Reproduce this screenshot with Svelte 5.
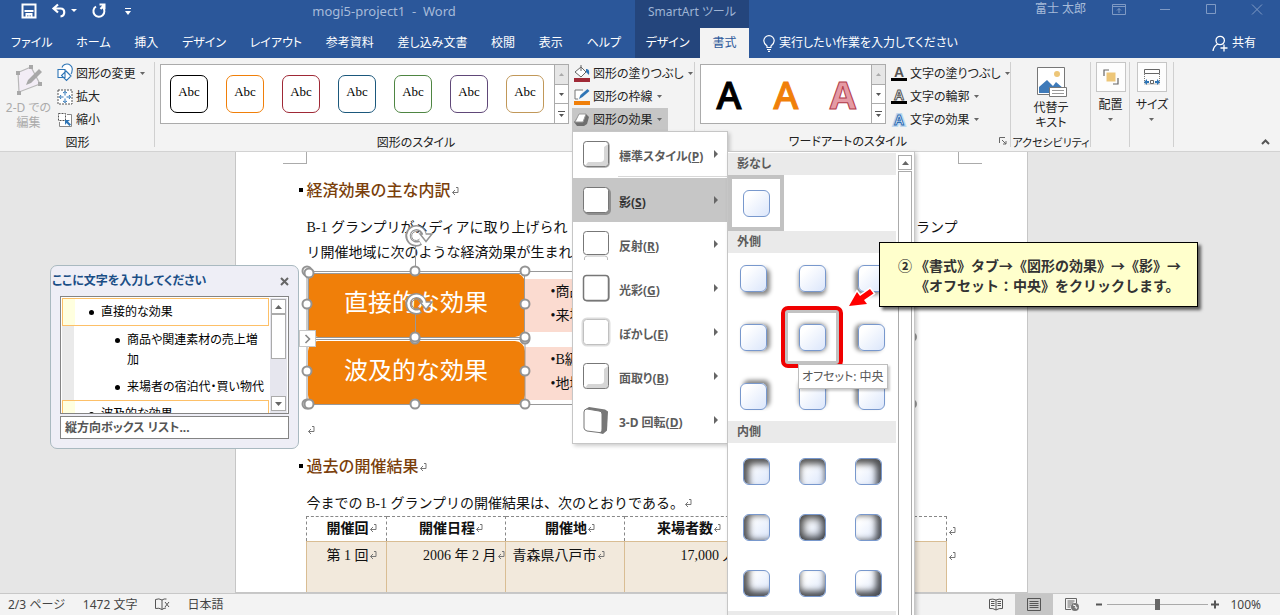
<script>
  const tabs = ['ファイル', 'ホーム', '挿入', 'デザイン', 'レイアウト', '参考資料', '差し込み文書', '校閲', '表示', 'ヘルプ'];
  const shapeStyles = ['#000000', '#f07f09', '#9f2936', '#1b587c', '#4e8542', '#604878', '#c19859'];
  const effects = [
    { kind: 'preset', label: '標準スタイル', key: 'P' },
    { kind: 'shadow', label: '影', key: 'S' },
    { kind: 'reflect', label: '反射', key: 'R' },
    { kind: 'glow', label: '光彩', key: 'G' },
    { kind: 'soft', label: 'ぼかし', key: 'E' },
    { kind: 'bevel', label: '面取り', key: 'B' },
    { kind: 'rotate', label: '3-D 回転', key: 'D' }
  ];
  const directions = [1, 0, -1].flatMap((dy) => [1, 0, -1].map((dx) => ({ dx, dy })));
  const handles = [
    [12, 12], [120, 12], [230, 12], [12, 45], [230, 45], [120, 80], [120, 78], [230, 80], [230, 78],
    [12, 112], [230, 112], [12, 145], [120, 145], [230, 145], [14, 14], [14, 145]
  ];
  let zoom = $state(100);
</script>

{#snippet mark()}
  <svg class="mark" viewBox="0 0 8 10" aria-hidden="true"><path d="M5 1.5h2v5H1.5M4 4 1.5 6.5 4 9" /></svg>
{/snippet}

{#snippet caret()}
  <svg class="caret" viewBox="0 0 5 3" aria-hidden="true"><path d="M0 0h5L2.500 3z" /></svg>
{/snippet}

{#snippet spinner()}
  <span class="spin">
    <button aria-label="前の行" disabled><svg viewBox="0 0 5 3"><path d="M0 3h5L2.500 0z" /></svg></button>
    <button aria-label="次の行"><svg viewBox="0 0 5 3"><path d="M0 0h5L2.500 3z" /></svg></button>
    <button aria-label="その他"><svg class="more" viewBox="0 0 7 6"><path d="M0 0h7v1H0zM1 3h5L3.500 6z" /></svg></button>
  </span>
{/snippet}

<div class="app">
  <header class="top">
    <div class="left">
      <div class="title">
        <button class="quick" aria-label="上書き保存">
          <svg width="16" height="16" viewBox="0 0 16 16"><path d="M1.500 1.500h13v13h-13zM3.500 8h9M5.500 14.500v-3.500h5v3.500" fill="none" stroke="#fff" stroke-width="2" /><path d="M8 11v3" stroke="#fff" stroke-width="1.500" /></svg>
        </button>
        <button class="quick" aria-label="元に戻す">
          <svg width="26" height="16" viewBox="0 0 26 16"><path d="M7 1.500 2.500 5.500 7 9.500M3 5.500h6.500c5 0 5 7.500 0 8" fill="none" stroke="#fff" stroke-width="2.200" /><path d="M20 6h6l-3 3z" fill="#fff" /></svg>
        </button>
        <button class="quick" aria-label="やり直し">
          <svg width="16" height="16" viewBox="0 0 16 16"><path d="M5 3.500a5.500 5.500 0 1 0 6.500.5M8.500 1.500h5v5M13 2 9.500 6" fill="none" stroke="#fff" stroke-width="2" /></svg>
        </button>
        <button class="quick custom" aria-label="クイック アクセスのカスタマイズ">
          <svg width="6" height="7" viewBox="0 0 6 7"><path d="M0 0h6v1H0zM0 3h6L3 7z" fill="#fff" /></svg>
        </button>
        <span class="doc">mogi5-project1&nbsp; -&nbsp; Word</span>
      </div>
      <nav class="tabs">
        {#each tabs as t}<button class="tab">{t}</button>{/each}
      </nav>
    </div>
    <div class="context">
      <div class="ctx-title">SmartArt ツール</div>
      <nav class="ctx-tabs"><button class="tab">デザイン</button><button class="tab active">書式</button></nav>
    </div>
    <div class="right">
      <div class="window">
        <span class="user">富士 太郎</span>
        <button aria-label="リボンの表示オプション"><svg viewBox="0 0 14 11"><path d="M.5.500h13v10H.5zM.5 2.500h13M7 9V4.500M5 6.500l2-2 2 2" /></svg></button>
        <button aria-label="最小化"><svg viewBox="0 0 14 11"><path d="M2 5.500h10" /></svg></button>
        <button aria-label="最大化"><svg viewBox="0 0 14 11"><path d="M2.500.500h9v9h-9z" /></svg></button>
        <button aria-label="閉じる"><svg viewBox="0 0 14 11"><path d="M2 .500l10 10M12 .500l-10 10" /></svg></button>
      </div>
      <div class="ask">
        <button class="tell">
          <svg width="12" height="17" viewBox="0 0 12 17"><path d="M4 12.500V11C2 9.500.8 8 .8 5.800a5.200 5.200 0 0 1 10.400 0C11.200 8 10 9.500 8 11v1.500zM4 14.500h4M5 16.300h2" fill="none" stroke="#fff" stroke-width="1.200" /></svg>
          実行したい作業を入力してください
        </button>
        <button class="share">
          <svg width="16" height="17" viewBox="0 0 16 17"><path d="M4 5.500a4.200 4.200 0 1 1 8.400 0 4.200 4.200 0 0 1-8.400 0M1 16c.5-3.500 2-5.500 4.500-7M12 9.500v7M8.500 13h7" fill="none" stroke="#fff" stroke-width="1.300" /></svg>
          共有
        </button>
      </div>
    </div>
  </header>

  <section class="ribbon" aria-label="リボン">
    <div class="group g-shape">
      <div class="body">
        <button class="big disabled" disabled>
          <svg width="30" height="32" viewBox="0 0 30 32"><path d="M4 7.500 17 2l9 17L5 27z" fill="#f3edf6" stroke="#b8b8b8" stroke-width="1.200" /><g fill="#a8a8a8"><path d="M2 6h4v4H2zM15 0h4v4h-4zM24 17h4v4h-4zM3 26h4v4H3zM12 20l2-5 11-11 3 3-11 11z" /></g></svg>
          2-D での<br />編集
        </button>
        <div class="stack">
          <button class="cmd"><svg width="16" height="16" viewBox="0 0 16 16"><path d="M1 3.500h7v8H1zM5 1.500a5 5 0 0 1 10 3.500 5 5 0 0 1-1 3M9 5l5 5-4.500 4.500-5-5z" fill="#fff" stroke="#2e75b6" stroke-width="1.100" /></svg>図形の変更{@render caret()}</button>
          <button class="cmd"><svg width="16" height="16" viewBox="0 0 16 16"><path d="M1 1h14v14H1z" fill="#fff" stroke="#555" stroke-dasharray="2 1" /><path d="M8 2.500v4M6 4l2-1.500L10 4M8 13.500v-4M6 12l2 1.500 2-1.500M2.500 8h4M4 6 2.500 8 4 10M13.500 8h-4M12 6l1.500 2L12 10" fill="none" stroke="#2e75b6" /></svg>拡大</button>
          <button class="cmd"><svg width="16" height="16" viewBox="0 0 16 16"><path d="M10 2.500h4.500v12h-12V10" fill="#fff" stroke="#888" /><path d="M1.500 1.500h7v7h-7z" fill="#fff" stroke="#555" stroke-dasharray="2 1" /><path d="M8 8h5l-2 1.500 3 3-1.500 1.500-3-3L8 13z" fill="#2e75b6" /></svg>縮小</button>
        </div>
      </div>
      <div class="label">図形</div>
    </div>

    <div class="group g-styles">
      <div class="body">
        <div class="gallery">
          {#each shapeStyles as c}<button class="abc" style:border-color={c}>Abc</button>{/each}
          {@render spinner()}
        </div>
        <div class="stack">
          <button class="cmd"><svg width="16" height="18" viewBox="0 0 16 18"><path d="M7 2l5 5-5 5-6-5zM7 0v6" fill="#fff" stroke="#666" /><path d="M12 4c3 0 3.500 2 3 6l-3-3z" fill="#2e75b6" /><path d="M0 13h16v4H0z" fill="#9f2936" /></svg>図形の塗りつぶし{@render caret()}</button>
          <button class="cmd"><svg width="16" height="18" viewBox="0 0 16 18"><path d="M9 2H1v9h3" fill="#fff" stroke="#777" /><path d="M5 11l1.500-4 7-6 2 2-7 6z" fill="#2e75b6" /><path d="M0 13h16v4H0z" fill="#f07f09" /></svg>図形の枠線{@render caret()}</button>
          <div class="anchor">
            <button class="cmd open" aria-haspopup="menu" aria-expanded="true"><svg width="16" height="16" viewBox="0 0 16 16"><path d="M6 2h6l3 3-2 7-3 2H3l-3-4z" fill="#6e6e6e" /><path d="M5 2h7l-3 8H1z" fill="#fff" stroke="#999" /></svg>図形の効果{@render caret()}</button>
            <div class="menu" role="menu">
              {#each effects as e, i}
                <button class="item" class:chosen={e.kind === 'shadow'} role="menuitem">
                  <svg class="fx" width="32" height="34" viewBox="0 0 32 34" aria-hidden="true">
                    {#if e.kind === 'rotate'}
                      <path d="M5 6.500 9 4l16 2.500 3 2-1 19-4 3.500-4-1z" fill="#777" />
                      <path d="M4 9q0-3 3-3l12 2q3 0 3 3v15q0 4-3 3.500L7 28q-3-1-3-3z" fill="#fff" stroke="#777" />
                    {:else}
                      {#if e.kind === 'shadow'}<rect x="4" y="5" width="27" height="27" rx="5" fill="#777" opacity=".7" />{/if}
                      {#if e.kind === 'glow' || e.kind === 'preset'}<rect x="3" y="4" width="27" height="27" rx="5" fill="#bbb" />{/if}
                      {#if e.kind === 'soft'}<rect x="3" y="4" width="26" height="26" rx="4" fill="#fff" stroke="#ddd" stroke-width="3" />{/if}
                      {#if e.kind === 'reflect'}<path d="M4.500 33v-2q0-2 3-2h17q3 0 3 2v2" fill="none" stroke="#bbb" />{/if}
                      <rect x="3.500" y="4.500" width="25" height={e.kind === 'reflect' ? 23 : 25} rx="3" fill="#fff" stroke={e.kind === 'soft' ? '#c0c0c0' : '#777'} stroke-width={e.kind === 'glow' ? 1.500 : 1} />
                      {#if e.kind === 'preset' || e.kind === 'bevel'}<path d="M28 7 24 10v12q0 3-4 3H8l-3 4q1 .5 3 .5h17q3 0 3-3z" fill="#999" opacity=".4" />{/if}
                    {/if}
                  </svg>
                  <span class="name">{e.label}(<u>{e.key}</u>)</span>
                  <svg class="arrow" width="4" height="8" viewBox="0 0 4 8" aria-hidden="true"><path d="M0 0l4 4-4 4z" /></svg>
                </button>
                {#if i === 0}<div class="sep"></div>{/if}
              {/each}
              <div class="sub">
                <div class="choices">
                  <h3>影なし</h3>
                  <button class="cell none" aria-label="影なし"><span class="tile"></span></button>
                  <h3>外側</h3>
                  <div class="grid">
                    {#each directions as d}
                      <button class="cell" class:hover={!d.dx && !d.dy} aria-label="オフセット">
                        <span class="tile outer" class:mid={!d.dx && !d.dy} style:--dx={d.dx} style:--dy={d.dy}></span>
                        {#if !d.dx && !d.dy}<span class="ring"></span><span class="tip" role="tooltip">オフセット: 中央</span>{/if}
                      </button>
                    {/each}
                  </div>
                  <h3>内側</h3>
                  <div class="grid">
                    {#each directions as d}
                      <button class="cell" aria-label="内側"><span class="tile inner" class:mid={!d.dx && !d.dy} style:--dx={d.dx} style:--dy={d.dy}></span></button>
                    {/each}
                  </div>
                  <h3></h3>
                </div>
                <div class="bar"><button aria-label="上へ"><svg width="7" height="4" viewBox="0 0 7 4"><path d="M0 4h7L3.500 0z" /></svg></button><span></span></div>
              </div>
            </div>
          </div>
        </div>
      </div>
      <div class="label">図形のスタイル</div>
    </div>

    <div class="group g-art">
      <div class="body">
        <div class="gallery art">
          <button aria-label="塗りつぶし 黒"><svg width="40" height="40" viewBox="0 0 40 40"><text x="20" y="35" class="wa" fill="#000" stroke="#000">A</text></svg></button>
          <button aria-label="塗りつぶし オレンジ"><svg width="40" height="40" viewBox="0 0 40 40"><text x="20" y="35" class="wa" fill="#f07f09" stroke="#f07f09">A</text></svg></button>
          <button aria-label="塗りつぶし 赤"><svg width="40" height="40" viewBox="0 0 40 40"><text x="20" y="35" class="wa heavy" fill="#e59aa4" stroke="#b23a4a">A</text></svg></button>
          {@render spinner()}
        </div>
        <div class="stack">
          <button class="cmd"><svg width="16" height="16" viewBox="0 0 16 16"><text x="8" y="11" class="la" fill="#555">A</text><path d="M0 12h16v3H0z" /></svg>文字の塗りつぶし{@render caret()}</button>
          <button class="cmd"><svg width="16" height="16" viewBox="0 0 16 16"><text x="8" y="11" class="la" fill="#fff" stroke="#555">A</text><path d="M0 12h16v3H0z" /></svg>文字の輪郭{@render caret()}</button>
          <button class="cmd"><svg width="16" height="16" viewBox="0 0 16 16"><text x="8" y="13" class="la" fill="#fff" stroke="#bdd7ee" stroke-width="4">A</text><text x="8" y="13" class="la" fill="#fff" stroke="#2e6db4">A</text></svg>文字の効果{@render caret()}</button>
        </div>
      </div>
      <div class="label">ワードアートのスタイル<button class="launch" aria-label="ダイアログを開く"><svg width="8" height="8" viewBox="0 0 8 8"><path d="M.5 6V.500H6M3 3l4 4M7 4v3H4" fill="none" stroke="#666" /></svg></button></div>
    </div>

    <div class="group g-acc">
      <div class="body">
        <button class="big">
          <svg width="30" height="32" viewBox="0 0 30 32"><path d="M1.500 2.500h27v27h-27z" fill="#fff" stroke="#777" /><circle cx="21" cy="9" r="3" fill="#edc678" /><path d="M3 28v-6l8-7 6 6 3-4 8 7v4z" fill="#3e7ab9" /><path d="M13.500 22.500h17v9h-17z" fill="#fff" stroke="#777" /><path d="M16 25.500h12M16 28.500h12" stroke="#999" /></svg>
          代替テ<br />キスト
        </button>
      </div>
      <div class="label">アクセシビリティ</div>
    </div>

    <div class="group g-small narrow">
      <button class="boxed"><span class="box"><svg width="16" height="16" viewBox="0 0 16 16"><path d="M1 7V1h5M15 9v6h-5" fill="none" stroke="#666" stroke-width="1.200" /><path d="M3.500 3.500h9v9h-9z" fill="#edc678" /></svg></span>配置{@render caret()}</button>
    </div>
    <div class="group g-small">
      <button class="boxed"><span class="box"><svg width="16" height="16" viewBox="0 0 16 16"><path d="M.5.500h15v4H.5z" fill="#fff" stroke="#666" /><path d="M.5 5v10h15V5" fill="none" stroke="#777" stroke-dasharray="1 1" /><path d="M6.500 11.500h3v3h-3z" fill="#fff" stroke="#666" /><path d="M0 13l3-3v2h2v2H3v2zM16 13l-3-3v2h-2v2h2v2z" fill="#2e75b6" /></svg></span>サイズ{@render caret()}</button>
    </div>
    <button class="fold" aria-label="リボンを折りたたむ"><svg width="9" height="6" viewBox="0 0 9 6"><path d="M1 5l3.500-3.500L8 5" fill="none" stroke="#555" stroke-width="2" /></svg></button>
  </section>

  <main class="work">
    <article class="page">
      <div class="crops"><i></i><i></i></div>
      <h2>経済効果の主な内訳{@render mark()}</h2>
      <p class="wide"><span>B-1 グランプリがメディアに取り上げられ</span><span>ランプ</span></p>
      <p>リ開催地域に次のような経済効果が生まれ</p>
      <div class="art-frame">
        <div class="row"><div class="node">直接的な効果</div><ul><li>商品</li><li>来場</li></ul></div>
        <div class="row"><div class="node">波及的な効果</div><ul><li>B級</li><li>地域</li></ul></div>
        <svg class="sel" width="640" height="200" viewBox="0 -40 640 200" aria-hidden="true">
          <g fill="none" stroke="#999">
            <path d="M12 12.500h605v133H12zM13.500 14.500h216v64h-216zM12 80.500h218v65" />
            <path d="M120.500-15v27M120.500 52v26" />
          </g>
          {#each [-23, 45] as y}
            <g fill="none" transform="translate(121 {y})"><path d="M4.500 6.500A8 8 0 1 1 8-1" stroke="#949494" stroke-width="5.500" /><path d="M3.500 3A4.500 4.500 0 1 1 3-3.500" stroke="#949494" /><path d="M4-2h12L10 5.500z" fill="#fff" stroke="#949494" stroke-width="1.500" /><path d="M4 7A8 8 0 1 1 8.500-.500" stroke="#fff" stroke-width="2.500" /></g>
          {/each}
          {#each handles as [x, y]}<circle cx={x} cy={y} r="4.500" fill="#fff" stroke="#949494" stroke-width="2" />{/each}
          <circle cx="617" cy="78" r="4" fill="#fff" stroke="#999" stroke-width="2" /><circle cx="617" cy="145" r="4" fill="#fff" stroke="#999" stroke-width="2" />
        </svg>
        <button class="toggle" aria-label="テキスト ウィンドウ"><svg width="7" height="10" viewBox="0 0 7 10"><path d="M1.500 1l4 4-4 4" fill="none" stroke="#888" stroke-width="1.600" /></svg></button>
      </div>
      <p class="blank">{@render mark()}</p>
      <h2 class="second">過去の開催結果{@render mark()}</h2>
      <p class="lead">今までの B-1 グランプリの開催結果は、次のとおりである。{@render mark()}</p>
      <div class="table-line">
        <table>
          <colgroup><col class="c1" /><col class="c2" /><col class="c2" /><col class="c2" /><col /></colgroup>
          <thead><tr><th>開催回{@render mark()}</th><th>開催日程{@render mark()}</th><th>開催地{@render mark()}</th><th>来場者数{@render mark()}</th><th></th></tr></thead>
          <tbody><tr><td class="mid">第 1 回{@render mark()}</td><td class="num">2006 年 2 月{@render mark()}</td><td>青森県八戸市{@render mark()}</td><td class="num people">17,000 人</td><td></td></tr></tbody>
        </table>
        <div class="ends">{@render mark()}{@render mark()}</div>
      </div>
    </article>

    <aside class="pane">
      <div class="pane-top"><strong>ここに文字を入力してください</strong><button aria-label="閉じる"><svg width="9" height="9" viewBox="0 0 9 9"><path d="M1 1l7 7M8 1 1 8" stroke="#666" stroke-width="2" /></svg></button></div>
      <div class="listbox">
        <ul class="lines">
          <li class="one">直接的な効果</li>
          <li class="two">商品や関連素材の売上増<br />加</li>
          <li class="two">来場者の宿泊代・買い物代</li>
          <li class="one">波及的な効果</li>
        </ul>
        <div class="scroll"><button aria-label="上へ"><svg width="7" height="4" viewBox="0 0 7 4"><path d="M0 4h7L3.500 0z" /></svg></button><span></span><button class="down" aria-label="下へ"><svg width="7" height="4" viewBox="0 0 7 4"><path d="M0 0h7L3.500 4z" /></svg></button></div>
      </div>
      <button class="kind">縦方向ボックス リスト...</button>
    </aside>

    <div class="callout">
      <span>②</span><span>《書式》タブ→《図形の効果》→《影》→<br />《オフセット：中央》をクリックします。</span>
      <svg class="pointer" width="30" height="28" viewBox="0 0 30 28" aria-hidden="true"><path d="M3 21 11 7l3 4L24 4l3.500 4.500L18 15l3 4z" fill="#fff" stroke="#fff" stroke-width="3" /><path d="M3 21 11 7l3 4L24 4l3.500 4.500L18 15l3 4z" fill="#f00" /></svg>
    </div>
  </main>

  <footer class="status">
    <span>2/3 ページ</span><span>1472 文字</span>
    <button aria-label="文章校正"><svg width="15" height="13" viewBox="0 0 15 13"><path d="M7 2Q4 0 .5 1.500v9Q4 9.500 7 11.500zM7 2q2-1.500 4.500-1M7 11.500q2-1.500 4-1.500M10 4l4 5M14 4l-4 5" fill="none" stroke="#555" /></svg></button>
    <span>日本語</span>
    <div class="views">
      <button aria-label="閲覧モード"><svg width="14" height="13" viewBox="0 0 14 13"><path d="M7 2Q4 .500.500 1.500v9Q4 10 7 12q3-2 6.500-1.500v-9Q10 .500 7 2v10M2 3.500h3.500M2 5.500h3.500M2 7.500h3.500M8.500 3.500H12M8.500 5.500H12M8.500 7.500H12" fill="none" stroke="#555" /></svg></button>
      <button class="on" aria-label="印刷レイアウト"><svg width="14" height="13" viewBox="0 0 14 13"><path d="M.5.500h13v12H.5zM2.500 3.500h9M2.500 5.500h9M2.500 7.500h9M2.500 9.500h9" fill="none" stroke="#555" /></svg></button>
      <button aria-label="Web レイアウト"><svg width="14" height="13" viewBox="0 0 14 13"><path d="M6 11.500H.5V.500h11v5M2.500 3h7M2.500 5h6M2.500 7h4M2.500 9h3" fill="none" stroke="#666" /><circle cx="10" cy="9" r="4" fill="#777" /><path d="M8 7l3 1-1 2M12 9l-1 2" stroke="#fff" fill="none" /></svg></button>
    </div>
    <button class="step" aria-label="縮小"><svg width="6" height="9" viewBox="0 0 6 9"><path d="M0 4.500h6" stroke="#555" stroke-width="2" /></svg></button>
    <input type="range" min="10" max="190" bind:value={zoom} aria-label="ズーム" />
    <button class="step" aria-label="拡大"><svg width="8" height="9" viewBox="0 0 8 9"><path d="M0 4.500h8M4 .500v8" stroke="#555" stroke-width="2" /></svg></button>
    <span class="pct">{zoom}%</span>
  </footer>
</div>

<style>
  :global(body) { margin: 0; }
  .app {
    height: 100vh; display: flex; flex-direction: column; overflow: hidden; position: relative;
    font: 12px/16px 'Noto Sans', 'Noto Sans CJK JP', sans-serif; font-feature-settings: 'palt'; color: #222; background: #e6e6e6;
  }
  .app * { box-sizing: border-box; }
  button { font: inherit; font-feature-settings: inherit; color: inherit; background: none; border: 0; padding: 0; margin: 0; white-space: nowrap; }
  ul, p, h2, h3 { margin: 0; padding: 0; }
  ul { list-style: none; }
  svg { flex: none; overflow: visible; }
  .caret { width: 5px; height: 3px; fill: #666; }
  .mark { width: 8px; height: 10px; fill: none; stroke: #777; }

  .top { display: flex; background: #2b579a; color: #fff; }
  .left { flex: 0 0 635px; }
  .title { display: flex; align-items: center; height: 28px; padding: 0 0 6px 21px; gap: 14px; }
  .quick { display: flex; }
  .custom { padding-left: 4px; }
  .doc { margin: 0 auto; padding-right: 72px; padding-left: 60px; font-size: 13px; color: #a7bbd9; }
  .tabs { display: flex; height: 30px; justify-content: space-between; padding: 0 3px 0 0; }
  .tab { padding: 0 11px; height: 30px; color: #fff; }
  .context { flex: 0 0 114px; background: #24457c; }
  .ctx-title { height: 28px; line-height: 24px; text-align: center; font-size: 12px; color: #9fb4d4; }
  .ctx-tabs { display: flex; }
  .ctx-tabs .tab { flex: 1; padding: 0; }
  .ctx-tabs .active { background: #f3f3f3; color: #2b579a; flex: 0 0 49px; }
  .right { flex: 1; }
  .window { display: flex; height: 28px; padding: 0 16px 10px 0; align-items: center; justify-content: flex-end; gap: 32px; }
  .user { color: #a7bbd9; margin-right: -6px; }
  .window button { display: flex; width: 14px; }
  .window svg { width: 14px; height: 11px; fill: none; stroke: #7f9ac4; }
  .ask { display: flex; height: 30px; justify-content: space-between; padding: 0 24px 0 14px; }
  .tell, .share { display: flex; align-items: center; gap: 4px; }

  .ribbon { display: flex; height: 94px; background: #f3f3f3; border-bottom: 1px solid #d2d2d2; }
  .group { display: flex; flex-direction: column; position: relative; min-width: 0; }
  .group::after { content: ''; position: absolute; right: 0; top: 4px; bottom: 4px; width: 1px; background: #d0d0d0; }
  .body { display: flex; height: 73px; padding-top: 4px; }
  .label { height: 20px; line-height: 23px; text-align: center; white-space: nowrap; }
  .g-shape { flex: 0 0 155px; }
  .g-styles { flex: 0 0 540px; padding-left: 5px; }
  .g-styles .label { padding-right: 23px; }
  .g-art { flex: 0 0 316px; padding-left: 5px; }
  .g-art .label { display: flex; justify-content: flex-end; align-items: center; gap: 92px; padding-right: 4px; }
  .g-acc { flex: 0 0 80px; align-items: center; }
  .g-acc .label { font-size: 11px; }
  .g-small { flex: 0 0 44px; align-items: center; padding-top: 4px; }
  .narrow { flex-basis: 39px; }
  .big { display: block; text-align: center; line-height: 15px; }
  .big svg { display: block; margin: 0 auto 3px; }
  .g-shape .big { width: 57px; padding-top: 2px; }
  .g-shape .stack { margin-left: -3px; }
  .g-acc .big { padding-top: 1px; }
  .disabled { color: #ababab; }
  .launch { display: flex; }
  .stack { display: flex; flex-direction: column; align-items: flex-start; }
  .cmd { display: flex; align-items: center; gap: 3px; height: 23px; padding: 0 5px 0 3px; }
  .cmd .caret { margin-left: 1px; }
  .g-styles .cmd { padding: 0 0 0 2px; }
  .g-styles .open { background: #c6c6c6; padding-right: 6px; }
  .gallery { flex: none; display: flex; align-items: center; width: 409px; height: 60px; margin: 2px 3px 0 0; border: 1px solid #ababab; background: #fff; }
  .abc { flex: none; width: 38px; height: 38px; margin: 0 9px; border: 1px solid; border-radius: 7px; background: #fff; font: 13px/16px 'Liberation Serif', serif; padding-bottom: 5px; color: #000; }
  .art { width: 186px; margin-right: 2px; }
  .art button { display: flex; justify-content: center; }
  .art > button { flex: 1; }
  .wa { font: 500 38px 'Noto Sans', sans-serif; text-anchor: middle; stroke-width: 1; }
  .heavy { font-weight: 700; }
  .la { font: 700 14px 'Liberation Sans', sans-serif; text-anchor: middle; }
  .spin { align-self: stretch; width: 14px; margin-left: auto; display: flex; flex-direction: column; border-left: 1px solid #ababab; }
  .spin button { flex: 1; display: flex; align-items: center; justify-content: center; }
  .spin button + button { border-top: 1px solid #ababab; }
  .spin button:disabled { background: #e6e6e6; }
  .spin svg { width: 5px; height: 3px; fill: #555; }
  .spin button:disabled svg { fill: #aaa; }
  .spin .more { width: 7px; height: 6px; }
  .boxed { display: flex; flex-direction: column; align-items: center; gap: 5px; }
  .box { display: flex; align-items: center; justify-content: center; width: 30px; height: 30px; border: 1px solid #c6c6c6; background: #fdfdfd; }
  .fold { margin: auto 10px 6px auto; display: flex; }

  .anchor { position: relative; }
  .menu { position: absolute; z-index: 10; top: 100%; left: 0; width: 156px; padding-bottom: 1px; background: #fff; border: 1px solid #c6c6c6; box-shadow: 2px 2px 4px #0003; }
  .item { display: flex; align-items: center; width: 100%; height: 44px; padding: 0 9px 0 7px; font-weight: 700; color: #5c5c5c; }
  .fx { margin-right: 7px; }
  .name { padding-top: 6px; }
  .arrow { margin-left: auto; fill: #666; }
  .chosen { background: #c6c6c6; color: #333; }
  .sep { height: 1px; margin: 0 0 1px 45px; background: #d8d8d8; }
  .sub { position: absolute; left: 100%; top: 19px; width: 188px; height: 480px; display: flex; background: #fff; border: 1px solid #c6c6c6; box-shadow: 2px 2px 4px #0003; }
  .choices { flex: 0 0 168px; padding-top: 1px; }
  h3 { height: 22px; padding-left: 9px; font-size: 12px; line-height: 21px; color: #5c5c5c; background: #eaeaea; }
  .grid { display: grid; grid-template-columns: repeat(3, 56px); }
  .cell { position: relative; width: 56px; height: 56px; display: flex; align-items: center; justify-content: center; }
  .none, .hover { border: 4px solid #c2c2c2; background: #fff; }
  .tile { width: 27px; height: 27px; border: 1px solid #7898cd; border-radius: 6px; background: linear-gradient(135deg, #fff 20%, #dbe6fb); }
  .outer { transform: translate(calc(var(--dx) * -3px), calc(var(--dy) * -3px)); box-shadow: calc(var(--dx) * 3px) calc(var(--dy) * 3px) 4px #0007; }
  .outer.mid { box-shadow: 0 0 5px #0009; }
  .inner { box-shadow: inset calc(var(--dx) * 5px) calc(var(--dy) * 5px) 6px #000a; }
  .inner.mid { box-shadow: inset 0 0 8px 3px #000c; }
  .ring { position: absolute; z-index: 1; inset: -7px; border: 4px solid #f00000; border-radius: 7px; }
  .tip { position: absolute; z-index: 2; left: 10px; top: 51px; padding: 3px; line-height: 17px; color: #575757; background: #fff; border: 1px solid #bebebe; box-shadow: 2px 2px 2px #0003; }
  .bar { width: 14px; margin: 3px 0 0 2px; display: flex; flex-direction: column; gap: 1px; }
  .bar button { height: 15px; border: 1px solid #ababab; display: flex; align-items: center; justify-content: center; }
  .bar svg, .scroll svg { fill: #666; }
  .bar span { flex: 1; border: 1px solid #ababab; }

  .work { position: relative; flex: 1; min-height: 0; padding-right: 18px; }
  .page { width: 793px; height: 100%; margin: 0 auto; padding: 0 69px 0 71px; background: #fff; border: 1px solid #c6c6c6; border-top: 0; overflow: hidden; color: #111; font: 14px/25px 'Liberation Serif', 'Noto Sans CJK JP', serif; font-feature-settings: normal; }
  .crops { display: flex; justify-content: space-between; height: 12px; margin: 0 -24px; }
  .crops i { width: 24px; border: solid #ababab; border-width: 0 1px 1px 0; }
  .crops i + i { border-width: 0 0 1px 1px; }
  h2 { position: relative; margin-top: 13px; font: 500 16px/25px 'Noto Sans CJK JP', sans-serif; color: #7b3f0b; }
  h2::before { content: ''; position: absolute; left: -8px; top: 11px; width: 4px; height: 4px; background: #000; }
  .page p { white-space: nowrap; }
  .wide { display: flex; justify-content: space-between; margin-top: 13px !important; }
  .art-frame { position: relative; display: flex; flex-direction: column; gap: 4px; padding: 8px 0 0 1px; }
  .row { display: flex; align-items: center; }
  .node { width: 217px; height: 64px; line-height: 60px; border-radius: 10px; background: #f07f09; color: #fff; font-size: 24px; text-align: center; }
  .row ul { flex: 1; margin-right: 48px; padding: 1px 0 4px 26px; background: #fbdbd0; line-height: 24px; }
  .row li::before { content: '•'; }
  .sel { position: absolute; left: -12px; top: -46px; }
  .toggle { position: absolute; left: -8px; top: 65px; width: 17px; height: 17px; display: flex; align-items: center; justify-content: center; background: #fff; border: 1px solid #c6c6c6; }
  .blank { padding-top: 13px !important; }
  .second { margin-top: 10px; }
  .lead { padding-top: 14px !important; line-height: 24px; }
  .table-line { display: flex; margin: 0 -20px 0 -1px; }
  table { width: 641px; flex: none; table-layout: fixed; border-collapse: collapse; }
  .c1 { width: 80px; } .c2 { width: 119px; }
  th, td { height: 25px; padding: 0 7px; line-height: 24px; white-space: nowrap; text-align: left; }
  th { border: 1px dashed #888; text-align: center; padding-left: 18px; }
  td { height: 52px; border: 1px solid #d9bd93; background: #f2e9dc; vertical-align: top; padding-top: 2px; }
  .mid { text-align: center; padding-left: 18px; }
  .num { text-align: right; padding-right: 0; }
  .people { padding-right: 6px; }
  .ends { display: flex; flex-direction: column; gap: 15px; padding: 10px 0 0 1px; }

  .pane { position: absolute; left: 50px; top: 113px; width: 249px; padding: 6px 9px 9px; background: #eeeef6; border: 1px solid #a9b9c0; border-radius: 7px; }
  .pane-top { display: flex; align-items: center; justify-content: space-between; height: 18px; margin: 0 0 6px -8px; color: #1b4e86; }
  .pane-top button { display: flex; }
  .listbox { display: flex; height: 118px; border: 1px solid #848484; background: #fff; padding: 1px 1px 0; overflow: hidden; color: #000; }
  .lines { flex: 1; line-height: 20px; background: linear-gradient(90deg, #eaeaea 12px, #fff 12px); }
  .lines li { position: relative; }
  .lines li::before { content: ''; position: absolute; width: 5px; height: 5px; border-radius: 50%; background: #000; }
  .one { height: 28px; line-height: 25px; padding-left: 38px; border: 1px solid #fdc068; background: linear-gradient(90deg, #ffffdf 12px, #fff 12px); }
  .one::before { left: 26px; top: 11px; }
  .two { padding: 4px 0 3px 65px; white-space: nowrap; }
  .two::before { left: 53px; top: 12px; }
  .scroll { width: 17px; margin-left: 1px; padding: 1px; display: flex; flex-direction: column; background: #e6e6ee; }
  .scroll button { height: 15px; flex: none; display: flex; align-items: center; justify-content: center; border: 1px solid #ababab; background: #fff; }
  .scroll span { height: 45px; border: 1px solid #ababab; background: #fff; }
  .scroll .down { margin-top: auto; margin-bottom: 1px; }
  .kind { width: 100%; height: 23px; margin-top: 2px; padding-left: 4px; text-align: left; font-weight: 700; color: #555; background: #fff; border: 1px solid #848484; }

  .callout { position: absolute; z-index: 20; left: 879px; top: 90px; width: 319px; height: 65px; padding: 12px 0 0 18px; display: flex; gap: 3px; white-space: nowrap; background: #ffffcc; border: 1px solid #000; box-shadow: 3px 3px 3px #0009; font: 700 14px/20px 'Noto Sans CJK JP', sans-serif; font-feature-settings: normal; color: #333; }
  .pointer { position: absolute; left: -34px; top: 42px; }

  .status { position: relative; display: flex; align-items: center; height: 22px; padding: 0 19px 0 8px; background: #f3f3f3; border-top: 1px solid #c8c8c8; color: #444; }
  .status > span { margin-right: 18px; }
  .status button { display: flex; align-items: center; justify-content: center; }
  .status > button { margin-right: 17px; }
  .views { display: flex; align-self: stretch; margin-left: auto; margin-right: 4px; }
  .views button { width: 38px; }
  .views .on { background: #c6c6c6; }
  .status .step { margin: 0 3px 0 1px; }
  input[type='range'] { appearance: none; width: 101px; height: 11px; margin: 0 2px; background: linear-gradient(#aaa, #aaa) center / 100% 1px no-repeat; }
  input[type='range']::-webkit-slider-thumb { appearance: none; width: 5px; height: 11px; background: #666; }
  .status > .pct { margin: 0 0 0 8px; }
</style>
